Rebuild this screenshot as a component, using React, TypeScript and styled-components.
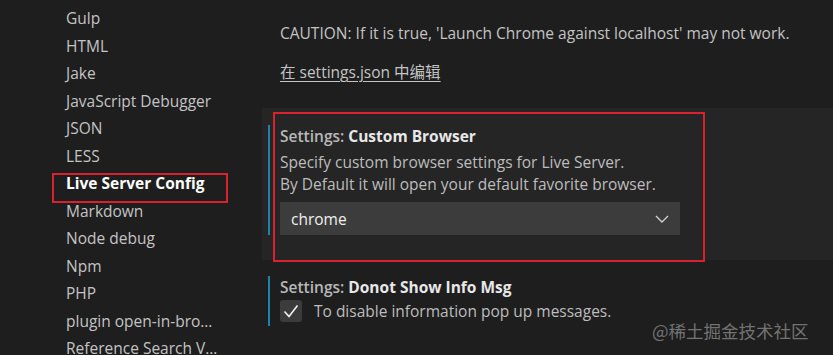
import React from "react";
import styled, { createGlobalStyle } from "styled-components";

const colors = {
  bg: "#1e1e1e",
  hover: "#252525",
  text: "#c4c4c4",
  strong: "#e8e8e8",
  input: "#3c3c3c",
  focus: "#1a85a8",
  mark: "#d9222d",
};

const font = `"Open Sans", "Noto Sans CJK SC", sans-serif`;

const GlobalStyle = createGlobalStyle`
  html, body {
    margin: 0;
    padding: 0;
    background: ${colors.bg};
    overflow: hidden;
  }
  body {
    font-family: ${font};
    font-size: 15.5px;
    color: ${colors.text};
  }
`;

const Page = styled.div`
  display: flex;
  width: 833px;
  height: 355px;
  overflow: hidden;
  position: relative;
  background: ${colors.bg};
`;

const Sidebar = styled.nav`
  width: 262px;
  flex-shrink: 0;
  padding-top: 5px;
`;

const TocItem = styled.div<{ $active?: boolean }>`
  position: relative;
  height: 27.5px;
  line-height: 27.5px;
  padding-left: 66px;
  white-space: nowrap;
  font-weight: ${(p) => (p.$active ? 700 : 400)};
  color: ${(p) => (p.$active ? "#ffffff" : colors.text)};
`;

const Mark = styled.div`
  position: absolute;
  border: 2px solid ${colors.mark};
  box-sizing: border-box;
  pointer-events: none;
`;

const SideMark = styled(Mark)`
  left: 52px;
  top: 3px;
  width: 176px;
  height: 30px;
`;

const Content = styled.main`
  flex: 1;
  display: flex;
  flex-direction: column;
`;

const Tail = styled.div`
  padding: 22px 0 0 18px;
  height: 108px;
  box-sizing: border-box;
`;

const Line = styled.div`
  line-height: 22px;
  white-space: nowrap;
`;

const EditLink = styled.a`
  display: inline-block;
  margin-top: 17px;
  line-height: 22px;
  color: ${colors.text};
  text-decoration: underline;
  text-underline-offset: 3px;
`;

const Setting = styled.section<{ $hover?: boolean }>`
  position: relative;
  background: ${(p) => (p.$hover ? colors.hover : "transparent")};
  padding: ${(p) => (p.$hover ? "17px 0 25px" : "16px 0 0")};
`;

const SettingMark = styled(Mark)`
  left: 11px;
  top: 4px;
  width: 432px;
  height: 150px;
`;

const Body = styled.div`
  margin-left: 6px;
  border-left: 2px solid ${colors.focus};
  padding-left: 10px;
`;

const Title = styled.div<{ $gap?: number }>`
  line-height: 22px;
  font-weight: 600;
  color: #b8b8b8;
  margin-bottom: ${(p) => p.$gap ?? 0}px;
  b {
    font-weight: 700;
    color: ${colors.strong};
  }
`;

const Desc = styled.div`
  line-height: 22px;
  color: #bdbdbd;
`;

const Select = styled.div`
  margin-top: 7px;
  width: 400px;
  height: 33px;
  background: ${colors.input};
  display: flex;
  align-items: center;
  justify-content: space-between;
  padding: 0 11px;
  box-sizing: border-box;
  color: #f0f0f0;
`;

const CheckRow = styled.label`
  display: flex;
  align-items: center;
  gap: 12px;
  margin-top: 2px;
  padding-bottom: 4px;
  line-height: 22px;
  color: #bdbdbd;
`;

const Box = styled.span`
  width: 22px;
  height: 22px;
  border-radius: 3px;
  background: ${colors.input};
  display: flex;
  align-items: center;
  justify-content: center;
`;

const Watermark = styled.div`
  position: absolute;
  left: 652px;
  top: 318px;
  font-size: 17.5px;
  color: rgba(200, 200, 200, 0.5);
  font-family: "Noto Sans CJK SC", sans-serif;
  white-space: nowrap;
`;

const toc = [
  "Gulp",
  "HTML",
  "Jake",
  "JavaScript Debugger",
  "JSON",
  "LESS",
  "Live Server Config",
  "Markdown",
  "Node debug",
  "Npm",
  "PHP",
  "plugin open-in-bro…",
  "Reference Search V…",
];

export default function App() {
  return (
    <Page>
      <GlobalStyle />
      <Sidebar>
        {toc.map((t) => (
          <TocItem key={t} $active={t === "Live Server Config"}>
            {t}
            {t === "Live Server Config" && <SideMark />}
          </TocItem>
        ))}
      </Sidebar>
      <Content>
        <Tail>
          <Line>CAUTION: If it is true, 'Launch Chrome against localhost' may not work.</Line>
          <EditLink>在 settings.json 中编辑</EditLink>
        </Tail>
        <Setting $hover>
          <SettingMark />
          <Body>
            <Title $gap={4}>
              Settings: <b>Custom Browser</b>
            </Title>
            <Desc>Specify custom browser settings for Live Server.</Desc>
            <Desc>By Default it will open your default favorite browser.</Desc>
            <Select>
              <span>chrome</span>
              <svg width="14" height="8" viewBox="0 0 14 8">
                <path d="M1 1l6 6 6-6" fill="none" stroke="#d0d0d0" strokeWidth="1.4" />
              </svg>
            </Select>
          </Body>
        </Setting>
        <Setting>
          <Body>
            <Title>
              Settings: <b>Donot Show Info Msg</b>
            </Title>
            <CheckRow>
              <Box>
                <svg width="16" height="14" viewBox="0 0 16 14">
                  <path d="M1.5 7.5l4.5 5 8.5-11" fill="none" stroke="#f2f2f2" strokeWidth="1.6" />
                </svg>
              </Box>
              To disable information pop up messages.
            </CheckRow>
          </Body>
        </Setting>
      </Content>
      <Watermark>@稀土掘金技术社区</Watermark>
    </Page>
  );
}
